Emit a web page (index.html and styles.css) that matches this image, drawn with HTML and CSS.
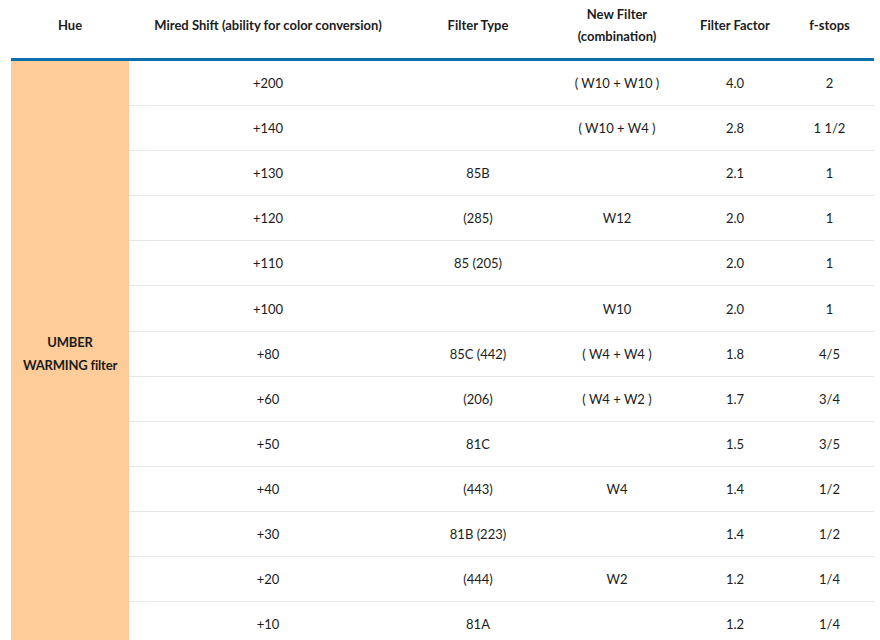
FILE: index.html
```html
<!DOCTYPE html>
<html>
<head>
<meta charset="utf-8">
<link rel="stylesheet" href="styles.css">
</head>
<body>
<table class="filters">
  <colgroup>
    <col class="c-hue"><col class="c-mired"><col class="c-type"><col class="c-new"><col class="c-factor"><col class="c-stops">
  </colgroup>
  <thead>
    <tr>
      <th>Hue</th>
      <th>Mired Shift (ability for color conversion)</th>
      <th>Filter Type</th>
      <th>New Filter<br>(combination)</th>
      <th>Filter Factor</th>
      <th>f-stops</th>
    </tr>
  </thead>
  <tbody>
    <tr><td class="hue" rowspan="13">UMBER<br>WARMING filter</td><td>+200</td><td></td><td>( W10 + W10 )</td><td>4.0</td><td>2</td></tr>
    <tr><td>+140</td><td></td><td>( W10 + W4 )</td><td>2.8</td><td>1 1/2</td></tr>
    <tr><td>+130</td><td>85B</td><td></td><td>2.1</td><td>1</td></tr>
    <tr><td>+120</td><td>(285)</td><td>W12</td><td>2.0</td><td>1</td></tr>
    <tr><td>+110</td><td>85 (205)</td><td></td><td>2.0</td><td>1</td></tr>
    <tr><td>+100</td><td></td><td>W10</td><td>2.0</td><td>1</td></tr>
    <tr><td>+80</td><td>85C (442)</td><td>( W4 + W4 )</td><td>1.8</td><td>4/5</td></tr>
    <tr><td>+60</td><td>(206)</td><td>( W4 + W2 )</td><td>1.7</td><td>3/4</td></tr>
    <tr><td>+50</td><td>81C</td><td></td><td>1.5</td><td>3/5</td></tr>
    <tr><td>+40</td><td>(443)</td><td>W4</td><td>1.4</td><td>1/2</td></tr>
    <tr><td>+30</td><td>81B (223)</td><td></td><td>1.4</td><td>1/2</td></tr>
    <tr><td>+20</td><td>(444)</td><td>W2</td><td>1.2</td><td>1/4</td></tr>
    <tr><td>+10</td><td>81A</td><td></td><td>1.2</td><td>1/4</td></tr>
  </tbody>
</table>
</body>
</html>
```
FILE: styles.css
```css
html, body {
  margin: 0;
  padding: 0;
  background: #ffffff;
}
body {
  padding: 0 6px 0 11px;
  font-family: Lato, "Noto Sans", "Liberation Sans", sans-serif;
  font-size: 13px;
  color: #1c1c1c;
}
.filters {
  width: 863px;
  border-collapse: collapse;
  table-layout: fixed;
}
.c-hue { width: 118px; }
.c-mired { width: 278px; }
.c-type { width: 142px; }
.c-new { width: 136px; }
.c-factor { width: 100px; }
.c-stops { width: 89px; }
.filters th {
  font-weight: 700;
  line-height: 22px;
  padding: 3px 0 11px;
  text-align: center;
  vertical-align: middle;
  border-bottom: 3px solid #0b6fac;
}
.filters td {
  height: 44.1px;
  padding: 0;
  text-align: center;
  vertical-align: middle;
  border-bottom: 1px solid #e6e6e6;
}
.filters td.hue {
  background: #fecc99;
  font-weight: 700;
  line-height: 23px;
  letter-spacing: -0.2px;
  border-bottom: none;
}
```
